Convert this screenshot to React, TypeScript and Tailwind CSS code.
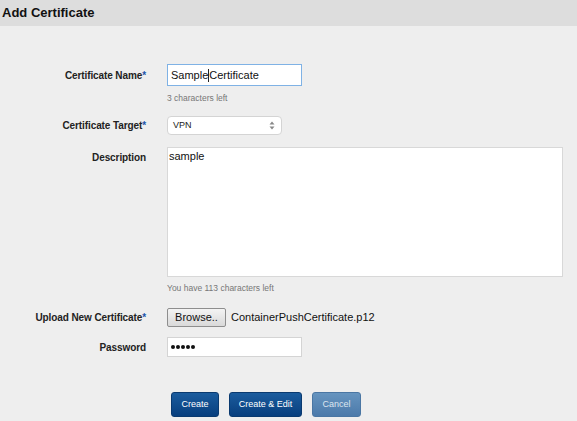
import React from "react";

function Label({ text, req, className = "" }: { text: string; req?: boolean; className?: string }) {
  return (
    <div className={"w-[146px] shrink-0 text-right text-[10px] font-bold text-[#222] tracking-[-0.1px] " + className}>
      {text}
      {req && <span className="text-[#2255aa]">*</span>}
    </div>
  );
}

export default function App() {
  return (
    <div className="w-[577px] h-[421px] bg-[#eeeeee] font-['Liberation_Sans',Arial,sans-serif] overflow-hidden">
      <div className="h-[26px] bg-[#dddddd] flex items-center pl-[2px]">
        <span className="text-[13px] font-bold text-[#111]">Add Certificate</span>
      </div>

      <div className="flex items-center mt-[38px]">
        <Label text="Certificate Name" req />
        <div className="ml-[21px] w-[135px] h-[22px] bg-white border border-[#7fb2e5] flex items-center pl-[3px] text-[11px] text-[#111]">
          <span>Sample</span>
          <span className="inline-block w-px h-[13px] bg-[#222]" />
          <span>Certificate</span>
        </div>
      </div>
      <div className="ml-[167px] mt-[7px] h-[10px] text-[8.5px] leading-[10px] text-[#777]">3 characters left</div>

      <div className="flex items-center mt-[13px]">
        <Label text="Certificate Target" req />
        <div className="ml-[21px] w-[115px] h-[19px] bg-white border border-[#d4d4d4] rounded-[4px] flex items-center justify-between pl-[5px] pr-[6px] text-[9px] text-[#222]">
          <span>VPN</span>
          <svg width="6" height="9" viewBox="0 0 6 9">
            <path d="M3 0.5 L5.5 3.5 H0.5 Z" fill="#888" />
            <path d="M3 8.5 L5.5 5.5 H0.5 Z" fill="#888" />
          </svg>
        </div>
      </div>

      <div className="flex items-start mt-[12px]">
        <Label text="Description" className="pt-[3px]" />
        <div className="ml-[21px] w-[396px] h-[130px] bg-white border border-[#d8d8d8] pl-[1px] pt-px text-[11px] leading-[14px] text-[#111]">
          sample
        </div>
      </div>
      <div className="ml-[167px] mt-[6px] h-[10px] text-[8.5px] leading-[10px] text-[#777]">You have 113 characters left</div>

      <div className="flex items-center mt-[15px]">
        <Label text="Upload New Certificate" req />
        <div className="ml-[21px] flex items-center">
          <div className="w-[59px] h-[19px] rounded-[2px] border border-[#8e8e8e] bg-gradient-to-b from-[#f4f4f4] to-[#d9d9d9] flex items-center justify-center text-[11px] text-[#111]">
            Browse..
          </div>
          <span className="ml-[5px] text-[11px] text-[#111]">ContainerPushCertificate.p12</span>
        </div>
      </div>

      <div className="flex items-center mt-[10px]">
        <Label text="Password" />
        <div className="ml-[21px] w-[135px] h-[20px] bg-white border border-[#d4d4d4] flex items-center pl-[3px] gap-[1px]">
          {[0, 1, 2, 3, 4].map((i) => (
            <span key={i} className="inline-block w-[4px] h-[4px] rounded-full bg-[#111]" />
          ))}
        </div>
      </div>

      <div className="flex ml-[171px] mt-[35px] gap-[10px]">
        <div className="w-[48px] h-[25px] rounded-[3px] bg-gradient-to-b from-[#1b5c9e] to-[#083f7e] border border-[#0a3a70] flex items-center justify-center text-[9px] text-white">
          Create
        </div>
        <div className="w-[73px] h-[25px] rounded-[3px] bg-gradient-to-b from-[#1b5c9e] to-[#083f7e] border border-[#0a3a70] flex items-center justify-center text-[9px] text-white">
          Create &amp; Edit
        </div>
        <div className="w-[49px] h-[25px] rounded-[3px] bg-gradient-to-b from-[#6694bf] to-[#4c7aaa] border border-[#4a76a3] flex items-center justify-center text-[9px] text-[#dde6f0]">
          Cancel
        </div>
      </div>
    </div>
  );
}
